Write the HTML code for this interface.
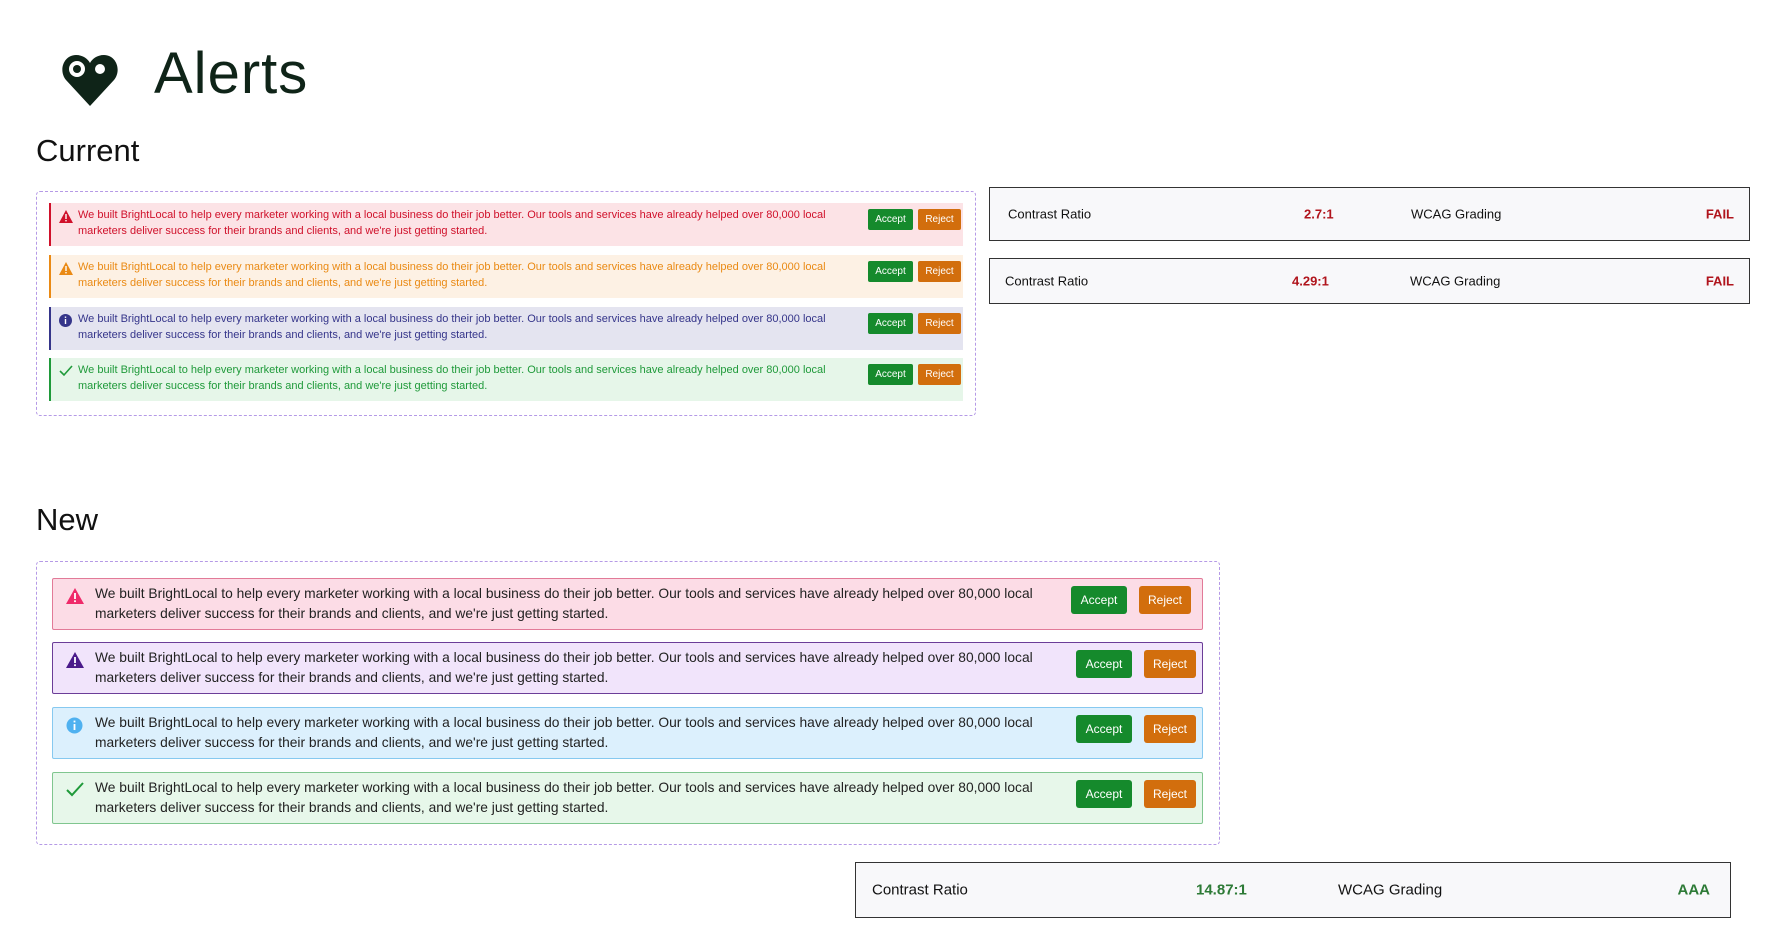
<!DOCTYPE html>
<html><head><meta charset="utf-8"><style>
*{box-sizing:border-box;margin:0;padding:0}
body{width:1791px;height:942px;background:#fff;font-family:"Liberation Sans",sans-serif;position:relative;overflow:hidden;color:#111}
.abs{position:absolute}
h1{position:absolute;left:154px;top:40px;font-size:58px;font-weight:400;color:#0f2418;letter-spacing:1px}
h2{position:absolute;font-size:31px;font-weight:400;color:#111}
.box{position:absolute;border:1.5px dashed #b59ae6;border-radius:4px}
.cur{position:absolute;left:49px;width:914px;height:43px;border-left:2px solid;font-size:11px;line-height:15.5px;padding:5px 0 0 27px}
.cur svg{position:absolute;left:8px;top:7px}
.cur .t{width:760px}
.btn{position:absolute;color:#fff;border-radius:2px;text-align:center}
.ok{background:#158a2c}.no{background:#d26e0d}
.cur .ok{left:817px;top:6px;width:45px;height:21px;font-size:10px;line-height:21px}
.cur .no{left:867px;top:6px;width:43px;height:21px;font-size:10px;line-height:21px}
.nw{position:absolute;left:52px;width:1151px;height:52px;border:1.5px solid;border-radius:2px;font-size:13.8px;line-height:20px;padding:5px 0 0 42px;color:#222}
.nw svg{position:absolute;left:13px;top:9px}
.nw .t{width:1000px}
.nw .ok{top:7px;width:56px;height:28px;font-size:12px;line-height:28px;border-radius:3px}
.nw .no{top:7px;width:52px;height:28px;font-size:12px;line-height:28px;border-radius:3px}
.cr{position:absolute;border:1.5px solid #333;background:#f8f8fa;font-size:13px}
.cr span{position:absolute;top:50%;transform:translateY(-50%)}
.red{color:#b0141c;font-weight:700}.grn{color:#2d7a36;font-weight:700}
</style></head><body>
<svg class="abs" style="left:60px;top:52px" width="60" height="56" viewBox="0 0 60 56"><path d="M30 54 L6 28 C-2 18 4 3 16 3 C23 3 28 7 30 11 C32 7 37 3 44 3 C56 3 62 18 54 28 Z" fill="#0f2418"/><circle cx="17" cy="17" r="8" fill="#fff"/><circle cx="17" cy="17" r="4" fill="#0f2418"/><circle cx="40" cy="17" r="5" fill="#fff"/></svg>
<h1>Alerts</h1>
<h2 style="left:36px;top:133px">Current</h2>
<div class="box" style="left:36px;top:191px;width:940px;height:225px"></div>
<div class="cur" style="top:203px;background:#fce3e6;border-color:#d0112b;color:#d0112b"><svg width="14" height="13" viewBox="0 0 14 13"><path d="M7 0L14 13H0Z" fill="#d0112b"/><rect x="6.3" y="4" width="1.4" height="5" fill="#fff"/><rect x="6.3" y="10" width="1.4" height="1.4" fill="#fff"/></svg><div class="t">We built BrightLocal to help every marketer working with a local business do their job better. Our tools and services have already helped over 80,000 local marketers deliver success for their brands and clients, and we're just getting started.</div><div class="btn ok">Accept</div><div class="btn no">Reject</div></div>
<div class="cur" style="top:255px;background:#fdf1e4;border-color:#ea8a14;color:#ea8a14"><svg width="14" height="13" viewBox="0 0 14 13"><path d="M7 0L14 13H0Z" fill="#ea8a14"/><rect x="6.3" y="4" width="1.4" height="5" fill="#fff"/><rect x="6.3" y="10" width="1.4" height="1.4" fill="#fff"/></svg><div class="t">We built BrightLocal to help every marketer working with a local business do their job better. Our tools and services have already helped over 80,000 local marketers deliver success for their brands and clients, and we're just getting started.</div><div class="btn ok">Accept</div><div class="btn no">Reject</div></div>
<div class="cur" style="top:307px;background:#e4e4f0;border-color:#35358a;color:#35358a"><svg width="13" height="13" viewBox="0 0 13 13"><circle cx="6.5" cy="6.5" r="6.5" fill="#35358a"/><rect x="5.8" y="5" width="1.4" height="5" fill="#fff"/><rect x="5.8" y="2.5" width="1.4" height="1.4" fill="#fff"/></svg><div class="t">We built BrightLocal to help every marketer working with a local business do their job better. Our tools and services have already helped over 80,000 local marketers deliver success for their brands and clients, and we're just getting started.</div><div class="btn ok">Accept</div><div class="btn no">Reject</div></div>
<div class="cur" style="top:358px;background:#e6f6e9;border-color:#1f9a3a;color:#1f9a3a"><svg width="14" height="12" viewBox="0 0 14 12"><path d="M1 6L5 10L13 1" stroke="#1f9a3a" stroke-width="1.6" fill="none"/></svg><div class="t">We built BrightLocal to help every marketer working with a local business do their job better. Our tools and services have already helped over 80,000 local marketers deliver success for their brands and clients, and we're just getting started.</div><div class="btn ok">Accept</div><div class="btn no">Reject</div></div>

<div class="cr" style="left:989px;top:187px;width:761px;height:54px"><span style="left:18px">Contrast Ratio</span><span class="red" style="left:314px">2.7:1</span><span style="left:421px">WCAG Grading</span><span class="red" style="right:15px">FAIL</span></div>
<div class="cr" style="left:989px;top:258px;width:761px;height:46px"><span style="left:15px">Contrast Ratio</span><span class="red" style="left:302px">4.29:1</span><span style="left:420px">WCAG Grading</span><span class="red" style="right:15px">FAIL</span></div>

<h2 style="left:36px;top:502px">New</h2>
<div class="box" style="left:36px;top:561px;width:1184px;height:284px"></div>
<div class="nw" style="top:578px;background:#fcdce6;border-color:#e27a98"><svg width="18" height="16" viewBox="0 0 18 16"><path d="M9 0L18 16H0Z" fill="#ef2a6a"/><rect x="8.1" y="5" width="1.8" height="6" fill="#fff"/><rect x="8.1" y="12.3" width="1.8" height="1.8" fill="#fff"/></svg><div class="t">We built BrightLocal to help every marketer working with a local business do their job better. Our tools and services have already helped over 80,000 local marketers deliver success for their brands and clients, and we're just getting started.</div><div class="btn ok" style="left:1018px">Accept</div><div class="btn no" style="left:1086px">Reject</div></div>
<div class="nw" style="top:642px;background:#f1e4fb;border-color:#6b3d98"><svg width="18" height="16" viewBox="0 0 18 16"><path d="M9 0L18 16H0Z" fill="#4a1a8a"/><rect x="8.1" y="5" width="1.8" height="6" fill="#fff"/><rect x="8.1" y="12.3" width="1.8" height="1.8" fill="#fff"/></svg><div class="t">We built BrightLocal to help every marketer working with a local business do their job better. Our tools and services have already helped over 80,000 local marketers deliver success for their brands and clients, and we're just getting started.</div><div class="btn ok" style="left:1023px">Accept</div><div class="btn no" style="left:1091px">Reject</div></div>
<div class="nw" style="top:707px;background:#dcf0fd;border-color:#86c9f0"><svg width="17" height="17" viewBox="0 0 17 17"><circle cx="8.5" cy="8.5" r="8" fill="#4fb1f0"/><rect x="7.6" y="7" width="1.8" height="6" fill="#fff"/><rect x="7.6" y="3.6" width="1.8" height="1.8" fill="#fff"/></svg><div class="t">We built BrightLocal to help every marketer working with a local business do their job better. Our tools and services have already helped over 80,000 local marketers deliver success for their brands and clients, and we're just getting started.</div><div class="btn ok" style="left:1023px">Accept</div><div class="btn no" style="left:1091px">Reject</div></div>
<div class="nw" style="top:772px;background:#e7f7ea;border-color:#80c68f"><svg width="18" height="15" viewBox="0 0 18 15"><path d="M1 8L6 13L17 1" stroke="#1f9a3a" stroke-width="2" fill="none"/></svg><div class="t">We built BrightLocal to help every marketer working with a local business do their job better. Our tools and services have already helped over 80,000 local marketers deliver success for their brands and clients, and we're just getting started.</div><div class="btn ok" style="left:1023px">Accept</div><div class="btn no" style="left:1091px">Reject</div></div>

<div class="cr" style="left:855px;top:862px;width:876px;height:56px;font-size:15px"><span style="left:16px">Contrast Ratio</span><span class="grn" style="left:340px">14.87:1</span><span style="left:482px">WCAG Grading</span><span class="grn" style="right:20px">AAA</span></div>
</body></html>
